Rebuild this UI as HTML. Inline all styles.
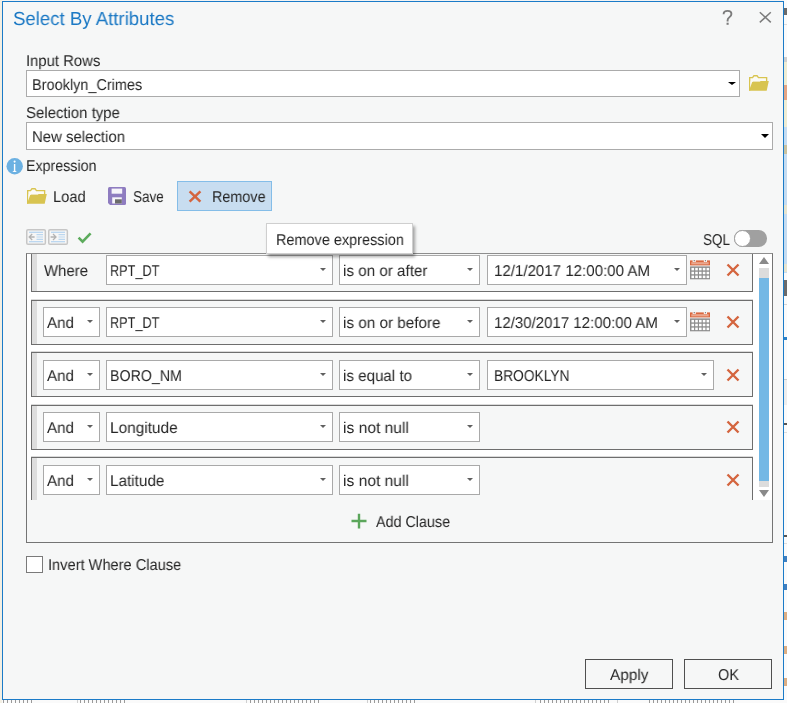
<!DOCTYPE html>
<html><head><meta charset="utf-8">
<style>
*{box-sizing:border-box;margin:0;padding:0}
html,body{width:787px;height:703px;overflow:hidden;background:#f3f3f3;position:relative;font-family:"Liberation Sans",sans-serif}
.a{position:absolute}
.t{position:absolute;line-height:1;white-space:nowrap;transform-origin:0 0;text-rendering:geometricPrecision;will-change:transform}
.box{position:absolute;background:#fff;border:1px solid #ababab}
.arr{position:absolute;width:0;height:0;border-left:3px solid transparent;border-right:3px solid transparent;border-top:3.5px solid #606060}
.row{position:absolute;left:31px;width:722px;height:45px;border:1px solid #6e6e6e;background:#f6f7f7;box-shadow:0 -1px 0 #dadada}
.bar{position:absolute;left:32px;width:5px;background:#dddddd}
.cb{position:absolute;height:30px;background:#fff;border:1px solid #a9a9a9}
.btn{position:absolute;border:1px solid #505050;background:#f6f7f7}
</style></head><body>

<div class="a" style="left:784px;top:0px;width:3px;height:703px;background:#fafafa"></div>
<div class="a" style="left:784px;top:8px;width:3px;height:7px;background:#6a6a6a"></div>
<div class="a" style="left:784px;top:24px;width:3px;height:1px;background:#dddddd"></div>
<div class="a" style="left:784px;top:57px;width:3px;height:5px;background:#cfcfcf"></div>
<div class="a" style="left:784px;top:62px;width:3px;height:65px;background:#eeecd3"></div>
<div class="a" style="left:784px;top:85px;width:3px;height:15px;background:#e3a585"></div>
<div class="a" style="left:784px;top:127px;width:3px;height:146px;background:#c5dcf1"></div>
<div class="a" style="left:784px;top:205px;width:3px;height:9px;background:#e6e4cf"></div>
<div class="a" style="left:784px;top:264px;width:3px;height:8px;background:#e6e4cf"></div>
<div class="a" style="left:784px;top:145px;width:3px;height:9px;background:#c9c2a0"></div>
<div class="a" style="left:784px;top:280px;width:3px;height:16px;background:#6a6a6a"></div>
<div class="a" style="left:784px;top:304px;width:3px;height:1px;background:#d6d6d6"></div>
<div class="a" style="left:784px;top:337px;width:3px;height:3px;background:#2a80c8"></div>
<div class="a" style="left:784px;top:379px;width:3px;height:1px;background:#cccccc"></div>
<div class="a" style="left:784px;top:380px;width:3px;height:25px;background:#ededed"></div>
<div class="a" style="left:784px;top:423px;width:3px;height:2px;background:#555555"></div>
<div class="a" style="left:784px;top:432px;width:3px;height:1px;background:#dddddd"></div>
<div class="a" style="left:784px;top:535px;width:3px;height:2px;background:#555555"></div>
<div class="a" style="left:784px;top:543px;width:3px;height:1px;background:#dddddd"></div>
<div class="a" style="left:784px;top:556px;width:3px;height:6px;background:#3f7fc0"></div>
<div class="a" style="left:784px;top:584px;width:3px;height:6px;background:#3f7fc0"></div>
<div class="a" style="left:784px;top:612px;width:3px;height:8px;background:#dcae84"></div>
<div class="a" style="left:784px;top:646px;width:3px;height:8px;background:#dcae84"></div>
<div class="a" style="left:784px;top:678px;width:3px;height:8px;background:#dcae84"></div>
<div class="a" style="left:0;top:700px;width:787px;height:3px;background:#fafafa"></div>
<div class="a" style="left:3px;top:700px;width:30px;height:3px;background:repeating-linear-gradient(90deg,#9a9a9a 0 1.5px,transparent 1.5px 4px)"></div>
<div class="a" style="left:80px;top:700px;width:45px;height:3px;background:repeating-linear-gradient(90deg,#9a9a9a 0 1.5px,transparent 1.5px 4px)"></div>
<div class="a" style="left:250px;top:700px;width:72px;height:3px;background:repeating-linear-gradient(90deg,#9a9a9a 0 1.5px,transparent 1.5px 4px)"></div>
<div class="a" style="left:370px;top:700px;width:46px;height:3px;background:repeating-linear-gradient(90deg,#9a9a9a 0 1.5px,transparent 1.5px 4px)"></div>
<div class="a" style="left:540px;top:700px;width:72px;height:3px;background:repeating-linear-gradient(90deg,#9a9a9a 0 1.5px,transparent 1.5px 4px)"></div>
<div class="a" style="left:649px;top:700px;width:88px;height:3px;background:repeating-linear-gradient(90deg,#9a9a9a 0 1.5px,transparent 1.5px 4px)"></div>
<div class="a" style="left:77px;top:700px;width:1px;height:3px;background:#cfcfcf"></div>
<div class="a" style="left:246px;top:700px;width:1px;height:3px;background:#cfcfcf"></div>
<div class="a" style="left:367px;top:700px;width:1px;height:3px;background:#cfcfcf"></div>
<div class="a" style="left:535px;top:700px;width:1px;height:3px;background:#cfcfcf"></div>
<div class="a" style="left:617px;top:700px;width:1px;height:3px;background:#cfcfcf"></div>
<div class="a" style="left:0;top:0;width:2px;height:703px;background:#f3efe3"></div>
<div class="a" style="left:2px;top:1px;width:782px;height:699px;border:1px solid #1b7bc8;background:#f6f7f7"></div>
<div class="t" style="left:13.26px;top:11.40px;font-size:18.9px;color:#1a78c4;transform:scaleX(0.9852)">Select By Attributes</div>
<svg class="a" style="left:720px;top:8px" width="16" height="18"><path d="M3.6 6.2 Q3.6 2.9 7.6 2.9 Q11.4 2.9 11.4 6.1 Q11.4 8.1 9.4 9.3 Q7.6 10.4 7.6 12.3 V13.6" stroke="#7c7c7c" stroke-width="1.9" fill="none"/><rect x="6.55" y="14.7" width="2.1" height="2.1" fill="#7c7c7c"/></svg>
<svg class="a" style="left:758px;top:11px" width="16" height="14"><path d="M1.8 1.2 L12.8 11.4 M12.8 1.2 L1.8 11.4" stroke="#7c7c7c" stroke-width="1.5" fill="none"/></svg>
<div class="t" style="left:25.58px;top:53.80px;font-size:15.7px;color:#262626;transform:scaleX(0.9468)">Input Rows</div>
<div class="box" style="left:26px;top:70px;width:714px;height:27px"></div>
<div class="t" style="left:32.20px;top:78.00px;font-size:15.7px;color:#262626;transform:scaleX(0.9236)">Brooklyn_Crimes</div>
<div class="arr" style="left:728px;top:81.9px;border-left-width:4px;border-right-width:4px;border-top-width:3.6px;border-top-color:#000"></div>
<svg class="a" style="left:749px;top:75px" width="21" height="17" viewBox="0 0 21 17"><path d="M0 2 H3.2 L4.6 0.1 H8.4 L9.8 2 H18.3 V6.5 H0 Z" fill="#d8c450"/><path d="M0 2 H1.35 V15.8 H0 Z" fill="#d8c450"/><path d="M1.35 3.35 H3.9 L5.2 1.5 H7.8 L9.1 3.35 H16.95 V6.2 H1.35 Z" fill="#fbfbf6"/><path d="M1.35 6 H4 L1.35 13 Z" fill="#fbfbf6"/><path d="M3.2 6.9 H11 L11.5 5.9 H19.8 L17.7 15.8 H0 Z" fill="#d8c450"/></svg>
<div class="t" style="left:26.15px;top:106.00px;font-size:15.7px;color:#262626;transform:scaleX(0.9526)">Selection type</div>
<div class="box" style="left:26px;top:122px;width:747px;height:28px"></div>
<div class="t" style="left:32.18px;top:130.00px;font-size:15.7px;color:#262626;transform:scaleX(0.9523)">New selection</div>
<div class="arr" style="left:761px;top:134.3px;border-left-width:4px;border-right-width:4px;border-top-width:4px;border-top-color:#000"></div>
<svg class="a" style="left:6px;top:158px" width="18" height="18"><circle cx="8.7" cy="8.2" r="8.2" fill="#6cb1e2"/><circle cx="8.6" cy="3.6" r="1.05" fill="#fff"/><path d="M7.9 6 h1.4 v6.8 l1.6 1.2 h-4.6 l1.6 -1.2z" fill="#fff"/></svg>
<div class="t" style="left:26.02px;top:158.60px;font-size:15.7px;color:#262626;transform:scaleX(0.9069)">Expression</div>
<svg class="a" style="left:27px;top:188px" width="21" height="17" viewBox="0 0 21 17"><path d="M0 2 H3.2 L4.6 0.1 H8.4 L9.8 2 H18.3 V6.5 H0 Z" fill="#d8c450"/><path d="M0 2 H1.35 V15.8 H0 Z" fill="#d8c450"/><path d="M1.35 3.35 H3.9 L5.2 1.5 H7.8 L9.1 3.35 H16.95 V6.2 H1.35 Z" fill="#fbfbf6"/><path d="M1.35 6 H4 L1.35 13 Z" fill="#fbfbf6"/><path d="M3.2 6.9 H11 L11.5 5.9 H19.8 L17.7 15.8 H0 Z" fill="#d8c450"/></svg>
<div class="t" style="left:53.19px;top:189.80px;font-size:15.7px;color:#262626;transform:scaleX(0.9343)">Load</div>
<svg class="a" style="left:108px;top:187px" width="18" height="18" viewBox="0 0 18 18"><path d="M0 1.5 Q0 0 1.5 0 H16.5 Q18 0 18 1.5 V16.5 Q18 18 16.5 18 H2 L0 16 Z" fill="#8e7cc0"/><rect x="3.6" y="1.6" width="10.6" height="5.1" fill="#f6f4fa"/><rect x="4.2" y="10.3" width="9.6" height="6.2" fill="#f6f4fa"/><rect x="7" y="12.3" width="6.8" height="4.2" fill="#6b6b6b"/></svg>
<div class="t" style="left:133.33px;top:189.80px;font-size:15.7px;color:#262626;transform:scaleX(0.8603)">Save</div>
<div class="a" style="left:177px;top:181px;width:95px;height:30px;background:#c8ddf0;border:1px solid #84bde8"></div>
<svg class="a" style="left:188px;top:190px" width="14" height="13"><path d="M1.6 1.3 L12.4 11.7 M12.4 1.3 L1.6 11.7" stroke="#d4653f" stroke-width="2.5" fill="none"/></svg>
<div class="t" style="left:211.51px;top:189.80px;font-size:15.7px;color:#262626;transform:scaleX(0.9171)">Remove</div>
<svg class="a" style="left:26px;top:229.2px" width="21" height="17" viewBox="0 0 21 17"><rect x="0.75" y="0.75" width="18.6" height="14.6" rx="1.3" fill="#f6f6f6" stroke="#c6c6c6" stroke-width="1.5"/><path d="M3 3.3 h14 M3 12.8 h14" stroke="#a9cdee" stroke-width="1.1"/><path d="M10.5 5.6 h6.5 M10.5 8 h6.5 M10.5 10.4 h6.5" stroke="#bcd7ef" stroke-width="1.1"/><path d="M8.6 8 H3.2 M6.2 5 L3.2 8 L6.2 11" stroke="#b3b3b3" stroke-width="1.3" fill="none"/></svg>
<svg class="a" style="left:48.1px;top:229.2px" width="21" height="17" viewBox="0 0 21 17"><rect x="0.75" y="0.75" width="18.6" height="14.6" rx="1.3" fill="#f6f6f6" stroke="#c6c6c6" stroke-width="1.5"/><path d="M3 3.3 h14 M3 12.8 h14" stroke="#a9cdee" stroke-width="1.1"/><path d="M10.5 5.6 h6.5 M10.5 8 h6.5 M10.5 10.4 h6.5" stroke="#bcd7ef" stroke-width="1.1"/><path d="M2.6 8 H8 M5 5 L8 8 L5 11" stroke="#b3b3b3" stroke-width="1.3" fill="none"/></svg>
<svg class="a" style="left:77px;top:232px" width="16" height="13"><path d="M1.6 5.6 L5.6 9.6 L13.6 1.4" stroke="#5cab5c" stroke-width="2.6" fill="none"/></svg>
<div class="t" style="left:702.74px;top:232.70px;font-size:15.7px;color:#262626;transform:scaleX(0.8559)">SQL</div>
<div class="a" style="left:734px;top:230px;width:32.5px;height:16.5px;border-radius:8.25px;background:#a0a0a0"></div>
<div class="a" style="left:734.1px;top:229.9px;width:16.8px;height:16.8px;border-radius:50%;background:#fff;border:1.3px solid #a0a0a0"></div>
<div class="a" style="left:26px;top:253px;width:747px;height:290px;border:1px solid #747474;border-top-color:#8e8e8e;background:#f6f7f7"></div>
<div class="a" style="left:27px;top:254px;width:745px;height:246px;background:#fff"></div>
<div class="a" style="left:28px;top:254px;width:729px;height:246px;overflow:hidden">
<div class="row" style="left:3px;top:-7px"></div>
<div class="bar" style="left:4px;top:-6px;height:43px"></div>
<div class="t" style="left:15.78px;top:9.70px;font-size:15.7px;color:#262626;transform:scaleX(0.9526)">Where</div>
<div class="cb" style="left:78px;top:1px;width:227px"><div class="arr" style="left:213px;top:12.3px"></div></div>
<div class="t" style="left:81.81px;top:9.70px;font-size:15.7px;color:#262626;transform:scaleX(0.8103)">RPT_DT</div>
<div class="cb" style="left:311px;top:1px;width:141px"><div class="arr" style="left:127px;top:12.3px"></div></div>
<div class="t" style="left:315.02px;top:9.70px;font-size:15.7px;color:#262626;transform:scaleX(0.9683)">is on or after</div>
<div class="cb" style="left:459px;top:1px;width:200px"><div class="arr" style="left:186px;top:12.3px"></div></div>
<div class="t" style="left:466.28px;top:9.70px;font-size:15.7px;color:#262626;transform:scaleX(0.9612)">12/1/2017 12:00:00 AM</div>
<svg class="a" style="left:662px;top:6.100000000000023px" width="20" height="20" viewBox="0 0 20 20"><rect x="0" y="0.4" width="20" height="5" fill="#d9683f"/><rect x="1.3" y="2.2" width="17.4" height="2.2" fill="#eba88f"/><rect x="2.6" y="-0.5" width="3.2" height="2.5" fill="#fbf3ef"/><rect x="13.8" y="-0.5" width="3.2" height="2.5" fill="#fbf3ef"/><rect x="3.7" y="-0.5" width="1.1" height="1.8" fill="#777"/><rect x="14.9" y="-0.5" width="1.1" height="1.8" fill="#8a8a8a"/><rect x="0" y="6.4" width="20" height="12.9" fill="#8e8e8e"/><rect x="1.45" y="7.90" width="2.6" height="2.5" fill="#fff"/><rect x="5.23" y="7.90" width="2.6" height="2.5" fill="#fff"/><rect x="9.01" y="7.90" width="2.6" height="2.5" fill="#fff"/><rect x="12.79" y="7.90" width="2.6" height="2.5" fill="#fff"/><rect x="16.57" y="7.90" width="2.6" height="2.5" fill="#fff"/><rect x="1.45" y="11.75" width="2.6" height="2.5" fill="#fff"/><rect x="5.23" y="11.75" width="2.6" height="2.5" fill="#fff"/><rect x="9.01" y="11.75" width="2.6" height="2.5" fill="#fff"/><rect x="12.79" y="11.75" width="2.6" height="2.5" fill="#fff"/><rect x="16.57" y="11.75" width="2.6" height="2.5" fill="#fff"/><rect x="1.45" y="15.60" width="2.6" height="2.5" fill="#fff"/><rect x="5.23" y="15.60" width="2.6" height="2.5" fill="#fff"/><rect x="9.01" y="15.60" width="2.6" height="2.5" fill="#fff"/><rect x="12.79" y="15.60" width="2.6" height="2.5" fill="#fff"/><rect x="16.57" y="15.60" width="2.6" height="2.5" fill="#fff"/></svg>
<svg class="a" style="left:698px;top:9px" width="14" height="14"><path d="M1.5 1.5 L12.5 12.5 M12.5 1.5 L1.5 12.5" stroke="#d4653f" stroke-width="2.4" fill="none"/></svg>
<div class="row" style="left:3px;top:46px"></div>
<div class="bar" style="left:4px;top:47px;height:43px"></div>
<div class="cb" style="left:15px;top:53px;width:57px"><div class="arr" style="left:43px;top:12.3px"></div></div>
<div class="t" style="left:19.39px;top:61.70px;font-size:15.7px;color:#262626;transform:scaleX(0.9653)">And</div>
<div class="cb" style="left:78px;top:53px;width:227px"><div class="arr" style="left:213px;top:12.3px"></div></div>
<div class="t" style="left:81.81px;top:61.70px;font-size:15.7px;color:#262626;transform:scaleX(0.8103)">RPT_DT</div>
<div class="cb" style="left:311px;top:53px;width:141px"><div class="arr" style="left:127px;top:12.3px"></div></div>
<div class="t" style="left:315.01px;top:61.70px;font-size:15.7px;color:#262626;transform:scaleX(0.9729)">is on or before</div>
<div class="cb" style="left:459px;top:53px;width:200px"><div class="arr" style="left:186px;top:12.3px"></div></div>
<div class="t" style="left:466.28px;top:61.70px;font-size:15.7px;color:#262626;transform:scaleX(0.9579)">12/30/2017 12:00:00 AM</div>
<svg class="a" style="left:662px;top:58.10000000000002px" width="20" height="20" viewBox="0 0 20 20"><rect x="0" y="0.4" width="20" height="5" fill="#d9683f"/><rect x="1.3" y="2.2" width="17.4" height="2.2" fill="#eba88f"/><rect x="2.6" y="-0.5" width="3.2" height="2.5" fill="#fbf3ef"/><rect x="13.8" y="-0.5" width="3.2" height="2.5" fill="#fbf3ef"/><rect x="3.7" y="-0.5" width="1.1" height="1.8" fill="#777"/><rect x="14.9" y="-0.5" width="1.1" height="1.8" fill="#8a8a8a"/><rect x="0" y="6.4" width="20" height="12.9" fill="#8e8e8e"/><rect x="1.45" y="7.90" width="2.6" height="2.5" fill="#fff"/><rect x="5.23" y="7.90" width="2.6" height="2.5" fill="#fff"/><rect x="9.01" y="7.90" width="2.6" height="2.5" fill="#fff"/><rect x="12.79" y="7.90" width="2.6" height="2.5" fill="#fff"/><rect x="16.57" y="7.90" width="2.6" height="2.5" fill="#fff"/><rect x="1.45" y="11.75" width="2.6" height="2.5" fill="#fff"/><rect x="5.23" y="11.75" width="2.6" height="2.5" fill="#fff"/><rect x="9.01" y="11.75" width="2.6" height="2.5" fill="#fff"/><rect x="12.79" y="11.75" width="2.6" height="2.5" fill="#fff"/><rect x="16.57" y="11.75" width="2.6" height="2.5" fill="#fff"/><rect x="1.45" y="15.60" width="2.6" height="2.5" fill="#fff"/><rect x="5.23" y="15.60" width="2.6" height="2.5" fill="#fff"/><rect x="9.01" y="15.60" width="2.6" height="2.5" fill="#fff"/><rect x="12.79" y="15.60" width="2.6" height="2.5" fill="#fff"/><rect x="16.57" y="15.60" width="2.6" height="2.5" fill="#fff"/></svg>
<svg class="a" style="left:698px;top:61px" width="14" height="14"><path d="M1.5 1.5 L12.5 12.5 M12.5 1.5 L1.5 12.5" stroke="#d4653f" stroke-width="2.4" fill="none"/></svg>
<div class="row" style="left:3px;top:98px"></div>
<div class="bar" style="left:4px;top:99px;height:43px"></div>
<div class="cb" style="left:15px;top:106px;width:57px"><div class="arr" style="left:43px;top:12.3px"></div></div>
<div class="t" style="left:19.39px;top:114.70px;font-size:15.7px;color:#262626;transform:scaleX(0.9653)">And</div>
<div class="cb" style="left:78px;top:106px;width:227px"><div class="arr" style="left:213px;top:12.3px"></div></div>
<div class="t" style="left:81.72px;top:114.70px;font-size:15.7px;color:#262626;transform:scaleX(0.9053)">BORO_NM</div>
<div class="cb" style="left:311px;top:106px;width:141px"><div class="arr" style="left:127px;top:12.3px"></div></div>
<div class="t" style="left:315.02px;top:114.70px;font-size:15.7px;color:#262626;transform:scaleX(0.9649)">is equal to</div>
<div class="cb" style="left:459px;top:106px;width:227px"><div class="arr" style="left:213px;top:12.3px"></div></div>
<div class="t" style="left:465.75px;top:114.70px;font-size:15.7px;color:#262626;transform:scaleX(0.8763)">BROOKLYN</div>
<svg class="a" style="left:698px;top:114px" width="14" height="14"><path d="M1.5 1.5 L12.5 12.5 M12.5 1.5 L1.5 12.5" stroke="#d4653f" stroke-width="2.4" fill="none"/></svg>
<div class="row" style="left:3px;top:151px"></div>
<div class="bar" style="left:4px;top:152px;height:43px"></div>
<div class="cb" style="left:15px;top:158px;width:57px"><div class="arr" style="left:43px;top:12.3px"></div></div>
<div class="t" style="left:19.39px;top:166.70px;font-size:15.7px;color:#262626;transform:scaleX(0.9653)">And</div>
<div class="cb" style="left:78px;top:158px;width:227px"><div class="arr" style="left:213px;top:12.3px"></div></div>
<div class="t" style="left:81.65px;top:166.70px;font-size:15.7px;color:#262626;transform:scaleX(0.9809)">Longitude</div>
<div class="cb" style="left:311px;top:158px;width:141px"><div class="arr" style="left:127px;top:12.3px"></div></div>
<div class="t" style="left:315.00px;top:166.70px;font-size:15.7px;color:#262626;transform:scaleX(0.9938)">is not null</div>
<svg class="a" style="left:698px;top:166px" width="14" height="14"><path d="M1.5 1.5 L12.5 12.5 M12.5 1.5 L1.5 12.5" stroke="#d4653f" stroke-width="2.4" fill="none"/></svg>
<div class="row" style="left:3px;top:203px"></div>
<div class="bar" style="left:4px;top:204px;height:43px"></div>
<div class="cb" style="left:15px;top:211px;width:57px"><div class="arr" style="left:43px;top:12.3px"></div></div>
<div class="t" style="left:19.39px;top:219.70px;font-size:15.7px;color:#262626;transform:scaleX(0.9653)">And</div>
<div class="cb" style="left:78px;top:211px;width:227px"><div class="arr" style="left:213px;top:12.3px"></div></div>
<div class="t" style="left:81.66px;top:219.70px;font-size:15.7px;color:#262626;transform:scaleX(0.9740)">Latitude</div>
<div class="cb" style="left:311px;top:211px;width:141px"><div class="arr" style="left:127px;top:12.3px"></div></div>
<div class="t" style="left:315.00px;top:219.70px;font-size:15.7px;color:#262626;transform:scaleX(0.9938)">is not null</div>
<svg class="a" style="left:698px;top:219px" width="14" height="14"><path d="M1.5 1.5 L12.5 12.5 M12.5 1.5 L1.5 12.5" stroke="#d4653f" stroke-width="2.4" fill="none"/></svg>
</div>
<div class="a" style="left:759px;top:257px;width:0;height:0;border-left:5px solid transparent;border-right:5px solid transparent;border-bottom:7.5px solid #8a8a8a"></div>
<div class="a" style="left:759px;top:268px;width:10px;height:9.5px;background:#dcdcdc"></div>
<div class="a" style="left:759px;top:277.5px;width:10px;height:203.5px;background:#74b8e5"></div>
<div class="a" style="left:759px;top:481px;width:10px;height:5.5px;background:#dcdcdc"></div>
<div class="a" style="left:759px;top:489.5px;width:0;height:0;border-left:5px solid transparent;border-right:5px solid transparent;border-top:7.5px solid #8a8a8a"></div>
<svg class="a" style="left:350px;top:512px" width="18" height="18"><path d="M9 1.7v14.8M1.5 9h15" stroke="#5ba65b" stroke-width="2.4"/></svg>
<div class="t" style="left:376.21px;top:515.00px;font-size:15.7px;color:#262626;transform:scaleX(0.9133)">Add Clause</div>
<div class="a" style="left:26px;top:556px;width:17px;height:17px;border:1px solid #7a7a7a;background:#fff"></div>
<div class="t" style="left:48.10px;top:558.20px;font-size:15.7px;color:#262626;transform:scaleX(0.9314)">Invert Where Clause</div>
<div class="btn" style="left:585px;top:659px;width:88px;height:30px"></div>
<div class="t" style="left:610.49px;top:667.90px;font-size:15.7px;color:#262626;transform:scaleX(0.9776)">Apply</div>
<div class="btn" style="left:684px;top:659px;width:88px;height:30px"></div>
<div class="t" style="left:717.80px;top:667.90px;font-size:15.7px;color:#262626;transform:scaleX(0.9252)">OK</div>
<div class="a" style="left:266px;top:223px;width:147px;height:31px;background:#fff;border:1px solid #cfcfcf;box-shadow:2px 3px 3px rgba(0,0,0,0.35)"></div>
<div class="t" style="left:276.31px;top:232.60px;font-size:15.7px;color:#262626;transform:scaleX(0.9221)">Remove expression</div>
</body></html>
